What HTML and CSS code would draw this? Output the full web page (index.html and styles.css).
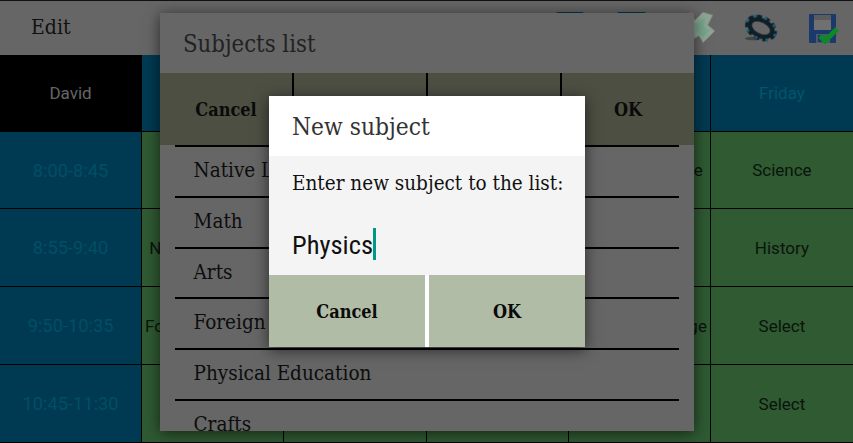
FILE: index.html
```html
<!DOCTYPE html>
<html lang="en">
<head>
<meta charset="utf-8">
<title>Timetable</title>
<link rel="stylesheet" href="styles.css">
</head>
<body>
<div class="screen">
  <header class="toolbar">
    <div class="toolbar-title">Edit</div>
    <div class="toolbar-icons">
      <svg class="tool" viewBox="0 0 62 55"><rect x="13" y="12" width="28" height="24" rx="2" fill="#003a52"/></svg>
      <svg class="tool" viewBox="0 0 62 55"><rect x="12" y="12" width="29" height="24" rx="2" fill="#003a52"/></svg>
      <svg class="tool" viewBox="0 0 62 55"><path class="soft" d="M24 12 L28 20 L36 12 L46 15 L41 25 L48 31 L36 43 L32 36 L25 40 L17 30 Z" fill="#8ba697" stroke="#80766a" stroke-width="1"/><path class="soft" d="M28 24 L38 18 L37 27 L42 31 L36 37 L30 31 Z" fill="#78a68c"/></svg>
      <svg class="tool" viewBox="0 0 62 55">
        <ellipse cx="24" cy="38.500" rx="8" ry="1.800" fill="#444" class="soft"/>
        <g class="soft" transform="rotate(27 32 28)">
          <ellipse cx="32" cy="28" rx="15" ry="10.500" fill="none" stroke="#0e2029" stroke-width="3.500" stroke-dasharray="5 3.500"/>
          <ellipse cx="32" cy="28" rx="12" ry="7.800" fill="none" stroke="#101e26" stroke-width="4.500"/>
          <g fill="#1a6280">
            <circle cx="16.500" cy="28" r="1.500"/><circle cx="47.500" cy="28" r="1.500"/>
            <circle cx="32" cy="17.500" r="1.500"/><circle cx="32" cy="38.500" r="1.500"/>
            <circle cx="21.500" cy="20" r="1.500"/><circle cx="42.500" cy="36" r="1.500"/>
            <circle cx="21.500" cy="36" r="1.500"/><circle cx="42.500" cy="20" r="1.500"/>
          </g>
        </g>
      </svg>
      <svg class="tool" viewBox="0 0 62 55">
        <g class="soft">
          <rect x="18" y="14" width="27" height="29" rx="1" fill="#1b3a6b"/>
          <rect x="23" y="15" width="17" height="15" fill="#707070"/>
          <rect x="23" y="15" width="17" height="5" fill="#5c5c5c"/>
          <rect x="25" y="34" width="14" height="9" fill="#4e5a6b"/>
          <rect x="27" y="35" width="4" height="7" fill="#1b3a6b"/>
        </g>
        <path class="soft" d="M29 36 L34 41 L46 29" fill="none" stroke="#0b8a26" stroke-width="5"/>
      </svg>
    </div>
  </header>

  <main class="timetable">
    <div class="cell cell-name">David</div>
    <div class="cell cell-head">Monday</div>
    <div class="cell cell-head">Tuesday</div>
    <div class="cell cell-head">Wednesday</div>
    <div class="cell cell-head">Thursday</div>
    <div class="cell cell-head cell-end">Friday</div>

    <div class="cell cell-time">8:00-8:45</div>
    <div class="cell cell-subject">Math</div>
    <div class="cell cell-subject">Arts</div>
    <div class="cell cell-subject">Math</div>
    <div class="cell cell-subject">Native Language</div>
    <div class="cell cell-subject cell-end">Science</div>

    <div class="cell cell-time">8:55-9:40</div>
    <div class="cell cell-subject">Native Language</div>
    <div class="cell cell-subject">Math</div>
    <div class="cell cell-subject">Crafts</div>
    <div class="cell cell-subject">Math</div>
    <div class="cell cell-subject cell-end">History</div>

    <div class="cell cell-time">9:50-10:35</div>
    <div class="cell cell-subject">Foreign Language</div>
    <div class="cell cell-subject">Science</div>
    <div class="cell cell-subject">Arts</div>
    <div class="cell cell-subject">Foreign Language</div>
    <div class="cell cell-subject cell-end">Select</div>

    <div class="cell cell-time">10:45-11:30</div>
    <div class="cell cell-subject">Select</div>
    <div class="cell cell-subject">Select</div>
    <div class="cell cell-subject">Select</div>
    <div class="cell cell-subject">Select</div>
    <div class="cell cell-subject cell-end">Select</div>
  </main>

  <section class="dialog-list">
    <h2 class="list-title">Subjects list</h2>
    <div class="list-actions">
      <div class="list-action">Cancel</div>
      <div class="list-action"></div>
      <div class="list-action"></div>
      <div class="list-action">OK</div>
    </div>
    <ul class="subjects">
      <li>Native Language</li>
      <li>Math</li>
      <li>Arts</li>
      <li>Foreign Language</li>
      <li>Physical Education</li>
      <li>Crafts</li>
    </ul>
  </section>

  <section class="dialog-new">
    <h2 class="new-title">New subject</h2>
    <div class="new-body">
      <p class="new-label">Enter new subject to the list:</p>
      <div class="new-input"><span>Physics</span><i class="caret"></i></div>
    </div>
    <div class="new-actions">
      <div class="new-action">Cancel</div>
      <div class="new-action">OK</div>
    </div>
  </section>
</div>
</body>
</html>
```
FILE: styles.css
```css
* { box-sizing: border-box; }
html, body { margin: 0; padding: 0; }
body { background: #666; }

.screen {
  position: relative;
  width: 853px;
  height: 443px;
  overflow: hidden;
  font-family: "Roboto", sans-serif;
  display: flex;
  flex-direction: column;
}

.toolbar {
  height: 55px;
  flex: none;
  background: #666;
  border-top: 1px solid #111;
  display: flex;
  align-items: stretch;
  justify-content: space-between;
}
.toolbar-title {
  padding: 13px 0 0 31px;
  font-family: "DejaVu Serif", serif;
  font-stretch: condensed;
  font-size: 21px;
  line-height: 26px;
  color: #111;
}
.toolbar-icons { display: flex; margin-top: -1px; }
.tool { width: 62px; height: 55px; display: block; }
.soft { filter: blur(0.5px); }

.timetable {
  flex: none;
  height: 388px;
  display: grid;
  grid-template-columns: repeat(6, 1fr);
  grid-template-rows: 77px 77px repeat(3, 78px);
}
.cell {
  display: flex;
  align-items: center;
  justify-content: center;
  white-space: nowrap;
  font-size: 17px;
  border-right: 1px solid #000;
  border-bottom: 1px solid #000;
}
.cell-end { border-right: 0; }
.cell-name { background: #000; color: #666; }
.cell-head { background: #003a52; color: #00566a; }
.cell-time { background: #003a52; color: #004f62; font-size: 18.300px; }
.cell-subject { background: #2f5a32; color: #0a140b; }

.dialog-list {
  position: absolute;
  left: 160px;
  top: 13px;
  width: 534px;
  height: 418px;
  background: #666;
  box-shadow: 0 2px 14px rgba(0, 0, 0, .6);
  display: flex;
  flex-direction: column;
  overflow: hidden;
  font-family: "DejaVu Serif", serif;
  font-stretch: condensed;
}
.list-title {
  margin: 0;
  height: 60px;
  flex: none;
  padding: 16px 0 0 23px;
  font-size: 23.700px;
  line-height: 30px;
  font-weight: normal;
  color: #222;
}
.list-actions {
  height: 72px;
  flex: none;
  display: grid;
  grid-template-columns: 134px 134px 134px 1fr;
  background: #4d4f43;
}
.list-action {
  display: flex;
  align-items: center;
  justify-content: center;
  font-size: 18px;
  font-weight: bold;
  color: #0a0a0a;
  border-right: 2px solid #000;
}
.list-action:last-child { border-right: 0; }
.subjects {
  list-style: none;
  margin: 0 15px;
  padding: 0;
}
.subjects li {
  height: 50.800px;
  border-top: 2px solid #000;
  padding-left: 18.500px;
  font-size: 20.500px;
  line-height: 47px;
  color: #0d0d0d;
}

.dialog-new {
  position: absolute;
  left: 269px;
  top: 96px;
  width: 316px;
  height: 251px;
  background: #f4f4f4;
  box-shadow: 0 3px 14px rgba(0, 0, 0, .6);
  display: flex;
  flex-direction: column;
  font-family: "DejaVu Serif", serif;
  font-stretch: condensed;
}
.new-title {
  margin: 0;
  height: 60px;
  flex: none;
  background: #fff;
  padding: 16px 0 0 23px;
  font-size: 24.300px;
  line-height: 30px;
  font-weight: normal;
  color: #333;
}
.new-body {
  height: 119px;
  flex: none;
  padding: 15px 0 0 23px;
}
.new-label {
  margin: 0;
  font-size: 20.500px;
  line-height: 24px;
  color: #111;
}
.new-input {
  margin-top: 33px;
  display: flex;
  align-items: center;
  height: 32px;
  font-family: "Roboto", sans-serif;
  font-size: 26.500px;
  color: #111;
}
.caret {
  width: 3px;
  height: 32px;
  background: #009688;
}
.new-actions {
  flex: 1;
  display: flex;
  gap: 4px;
  background: #fff;
}
.new-action {
  flex: 1;
  display: flex;
  align-items: center;
  justify-content: center;
  background: #b0bca5;
  font-size: 18px;
  font-weight: bold;
  color: #0a0a0a;
}
```
